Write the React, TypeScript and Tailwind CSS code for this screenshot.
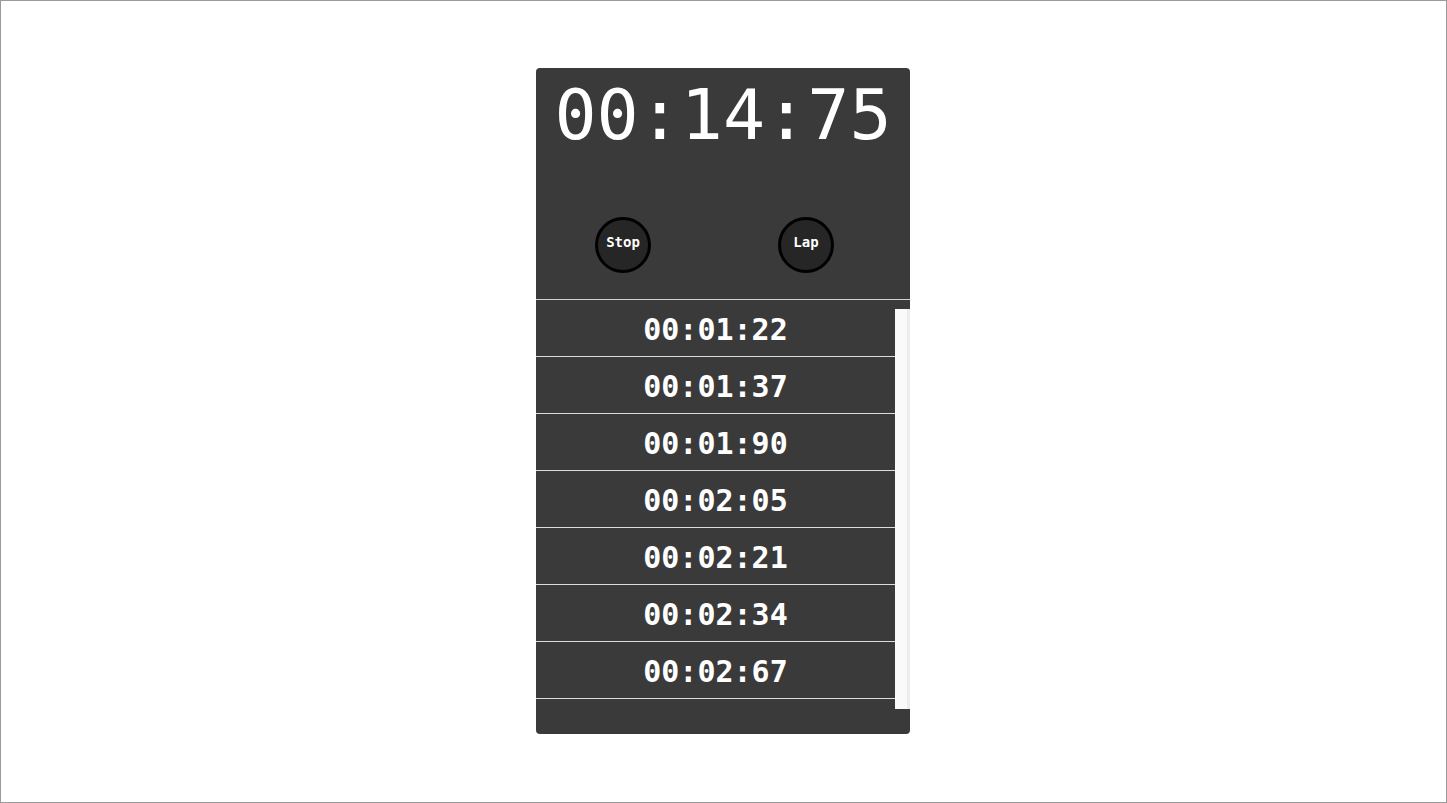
import React from "react";

const laps = ["00:01:22", "00:01:37", "00:01:90", "00:02:05", "00:02:21", "00:02:34", "00:02:67"];

const mono = { fontFamily: '"DejaVu Sans Mono", "Liberation Mono", monospace' };

function RoundButton({ label }: { label: string }) {
  return (
    <button className="w-[56px] h-[56px] rounded-full border-[3px] border-black bg-[#262626] text-white text-[14px] leading-none font-bold flex items-center justify-center pb-[6px]">
      {label}
    </button>
  );
}

export default function App() {
  return (
    <div className="w-full h-[803px] border border-[#9a9a9a] bg-white flex justify-center pr-[1px]" style={mono}>
      <div className="mt-[67px] w-[374px] h-[666px] bg-[#3a3a3a] rounded-[4px] flex flex-col">
        <div className="h-[232px] border-b border-[#d2d2d2] flex flex-col items-center">
          <div className="pt-[12px] text-[70px] leading-none text-white">00:14:75</div>
          <div className="mt-[67px] w-full flex justify-between pl-[59px] pr-[76px]">
            <RoundButton label="Stop" />
            <RoundButton label="Lap" />
          </div>
        </div>
        <div className="flex">
          <div className="w-[359px] flex flex-col">
            {laps.map((lap) => (
              <div
                key={lap}
                className="h-[57px] border-b border-[#dcdcdc] flex items-center justify-center text-white text-[30px] font-bold pt-[2px]"
              >
                {lap}
              </div>
            ))}
          </div>
          <div className="mt-[9px] w-[15px] h-[400px] bg-[#fafafa] border-r-[3px] border-[#ededed]" />
        </div>
      </div>
    </div>
  );
}
